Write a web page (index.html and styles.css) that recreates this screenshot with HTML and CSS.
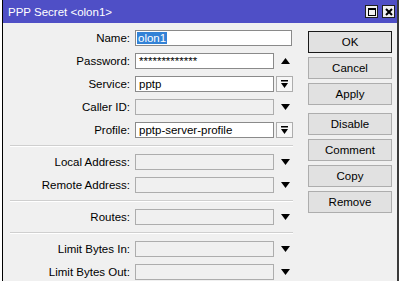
FILE: index.html
```html
<!DOCTYPE html>
<html lang="en">

<head>
    <meta charset="UTF-8">
    <title>PPP Secret</title>
    <link rel="stylesheet" href="styles.css">
</head>

<body>
<div class="window">
    <div class="titlebar">
        <span class="titlebar__text">PPP Secret &lt;olon1&gt;</span>
        <div class="titlebar__btns">
            <span class="titlebar__btn">
                <svg width="10" height="10" viewBox="0 0 10 10"><rect x="1.5" y="1.5" width="7" height="7" fill="none" stroke="#000" stroke-width="1" /><rect x="1" y="1" width="8" height="2" fill="#000" /></svg>
            </span>
            <span class="titlebar__btn">
                <svg width="10" height="10" viewBox="0 0 10 10"><path d="M2 2L8 8M8 2L2 8" stroke="#000" stroke-width="2" /></svg>
            </span>
        </div>
    </div>

    <div class="content">
        <div class="form">
            <div class="row">
                <span class="label">Name:</span>
                <div class="field field--wide"><span class="selected">olon1</span></div>
            </div>
            <div class="row">
                <span class="label">Password:</span>
                <div class="field">*************</div>
                <span class="arrow"><svg width="9" height="6" viewBox="0 0 9 6"><polygon points="0,6 9,6 4.5,0" fill="#000" /></svg></span>
            </div>
            <div class="row">
                <span class="label">Service:</span>
                <div class="field">pptp</div>
                <span class="dropbtn"><svg width="7" height="8" viewBox="0 0 7 8"><rect x="0" y="0" width="7" height="1.5" fill="#000" /><polygon points="0,3 7,3 3.5,8" fill="#000" /></svg></span>
            </div>
            <div class="row">
                <span class="label">Caller ID:</span>
                <div class="field field--off"></div>
                <span class="arrow"><svg width="9" height="6" viewBox="0 0 9 6"><polygon points="0,0 9,0 4.5,6" fill="#000" /></svg></span>
            </div>
            <div class="row">
                <span class="label">Profile:</span>
                <div class="field">pptp-server-profile</div>
                <span class="dropbtn"><svg width="7" height="8" viewBox="0 0 7 8"><rect x="0" y="0" width="7" height="1.5" fill="#000" /><polygon points="0,3 7,3 3.5,8" fill="#000" /></svg></span>
            </div>

            <div class="sep"></div>

            <div class="row">
                <span class="label">Local Address:</span>
                <div class="field field--off"></div>
                <span class="arrow"><svg width="9" height="6" viewBox="0 0 9 6"><polygon points="0,0 9,0 4.5,6" fill="#000" /></svg></span>
            </div>
            <div class="row">
                <span class="label">Remote Address:</span>
                <div class="field field--off"></div>
                <span class="arrow"><svg width="9" height="6" viewBox="0 0 9 6"><polygon points="0,0 9,0 4.5,6" fill="#000" /></svg></span>
            </div>

            <div class="sep"></div>

            <div class="row">
                <span class="label">Routes:</span>
                <div class="field field--off"></div>
                <span class="arrow"><svg width="9" height="6" viewBox="0 0 9 6"><polygon points="0,0 9,0 4.5,6" fill="#000" /></svg></span>
            </div>

            <div class="sep"></div>

            <div class="row">
                <span class="label">Limit Bytes In:</span>
                <div class="field field--off"></div>
                <span class="arrow"><svg width="9" height="6" viewBox="0 0 9 6"><polygon points="0,0 9,0 4.5,6" fill="#000" /></svg></span>
            </div>
            <div class="row">
                <span class="label">Limit Bytes Out:</span>
                <div class="field field--off"></div>
                <span class="arrow"><svg width="9" height="6" viewBox="0 0 9 6"><polygon points="0,0 9,0 4.5,6" fill="#000" /></svg></span>
            </div>
        </div>

        <div class="buttons">
            <button class="btn btn--default">OK</button>
            <button class="btn">Cancel</button>
            <button class="btn">Apply</button>
            <button class="btn btn--group">Disable</button>
            <button class="btn">Comment</button>
            <button class="btn">Copy</button>
            <button class="btn">Remove</button>
        </div>
    </div>
</div>
</body>

</html>
```

FILE: styles.css
```css
body {
  margin: 0;
  padding: 0;
  background-color: #FFFFFF;
  font-family: "Liberation Sans", Arial, sans-serif;
  font-size: 11.5px;
  color: #000000;
}

.window {
  box-sizing: border-box;
  width: 397px;
  height: 281px;
  margin-left: 2px;
  border-left: 1px solid #000000;
  border-right: 2px solid #3a3a3a;
  background-color: #F0F0F0;
  overflow: hidden;
}

.titlebar {
  display: flex;
  align-items: center;
  height: 23px;
  padding: 0 2px 0 5px;
  background-color: #4F4FC6;
  color: #FFFFFF;
}

.titlebar__text {
  font-size: 11.5px;
}

.titlebar__btns {
  display: flex;
  gap: 4px;
  margin-left: auto;
}

.titlebar__btn {
  display: flex;
  align-items: center;
  justify-content: center;
  box-sizing: border-box;
  width: 13px;
  height: 13px;
  background-color: #F0F0F0;
  border: 1px solid #202020;
}

.content {
  display: flex;
}

.form {
  display: flex;
  flex-direction: column;
  gap: 7px;
  width: 295px;
  padding-top: 7px;
}

.row {
  display: flex;
  align-items: center;
  height: 16px;
}

.label {
  width: 127px;
  padding-right: 5px;
  text-align: right;
  white-space: nowrap;
}

.field {
  box-sizing: border-box;
  width: 139px;
  height: 16px;
  padding: 0 3px;
  line-height: 14px;
  background-color: #FFFFFF;
  border: 1px solid #8A8A8A;
  white-space: nowrap;
  overflow: hidden;
}

.field--wide {
  width: 157px;
  padding-left: 1px;
}

.field--off {
  background-color: #F0F0F0;
  border-color: #ADADAD;
}

.selected {
  padding: 0 1px;
  background-color: #3382D6;
  color: #FFFFFF;
}

.arrow {
  display: flex;
  justify-content: center;
  width: 18px;
  margin-left: 2px;
}

.dropbtn {
  display: flex;
  align-items: center;
  justify-content: center;
  box-sizing: border-box;
  width: 17px;
  height: 16px;
  margin-left: 2px;
  background-color: #F7F7F7;
  border: 1px solid #ADADAD;
}

.sep {
  height: 0;
  margin: 0 5px 0 7px;
  border-top: 1px solid #CFCFCF;
  border-bottom: 1px solid #FFFFFF;
}

.buttons {
  display: flex;
  flex-direction: column;
  gap: 4px;
  width: 84px;
  margin-left: 10px;
  padding-top: 8px;
}

button {
  box-sizing: border-box;
  height: 22px;
  padding: 0;
  font-family: "Liberation Sans", Arial, sans-serif;
  font-size: 11.5px;
  color: #000000;
  background-color: #E1E1E1;
  border: 1px solid #ADADAD;
}

.btn--default {
  border: 1px solid #1A1A1A;
}

.btn--group {
  margin-top: 4px;
}
```
